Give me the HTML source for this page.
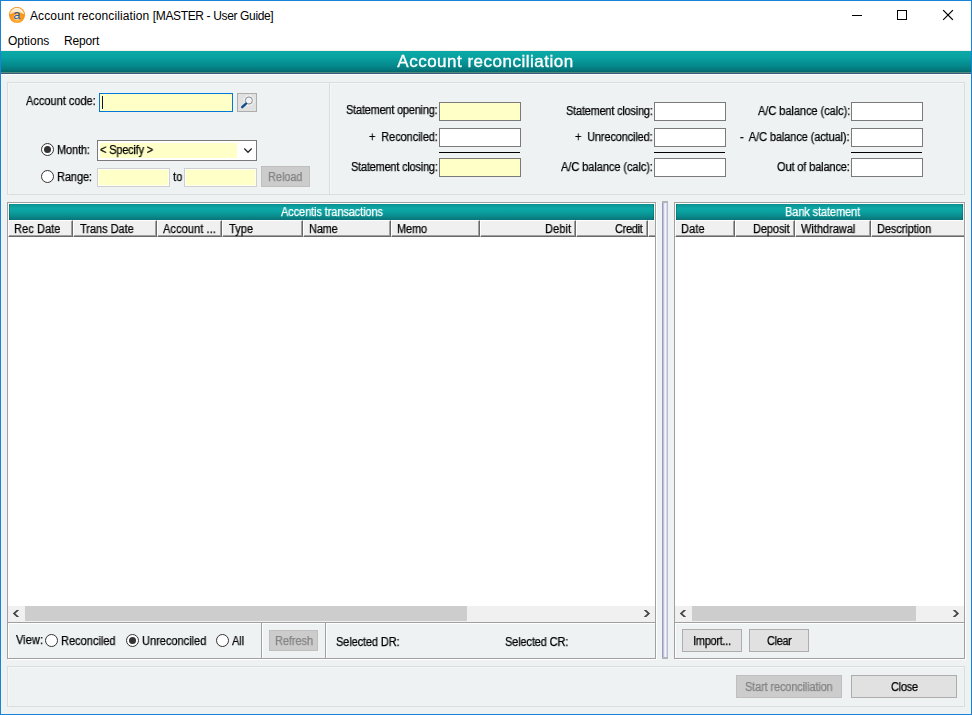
<!DOCTYPE html>
<html lang="en">
<head>
<meta charset="utf-8">
<title>Account reconciliation [MASTER - User Guide]</title>
<style>
*{box-sizing:border-box;margin:0;padding:0}
html,body{width:972px;height:715px;overflow:hidden;background:#eef2f3}
body{position:relative;font-family:"Liberation Sans",Arial,sans-serif;font-size:11px;color:#000}
.abs,.t,.box,.btn,.inp,.hc,.radio{position:absolute}
.t{will-change:transform;-webkit-text-stroke:.25px currentColor;white-space:nowrap;font-size:12px;line-height:14px;height:14px;transform:scaleX(.92);transform-origin:0 50%}
#win{position:absolute;left:0;top:0;width:972px;height:715px;background:#eef2f3;overflow:hidden}
#frame{position:absolute;left:0;top:0;width:972px;height:715px;border:1px solid #1883d7;z-index:50;pointer-events:none}
#titlebar{position:absolute;left:0;top:0;width:972px;height:51px;background:#fff;border-bottom:1px solid #f3f1f0}
#title{-webkit-text-stroke:0;will-change:auto;transform:none;left:30px;top:8px;font-size:12px;line-height:16px;height:16px}
.menu{-webkit-text-stroke:0;will-change:auto;transform:none;font-size:12px;line-height:16px;height:16px;top:33px}
#banner{position:absolute;left:0;top:51px;width:972px;height:24px;background:linear-gradient(#0aa9a6 0%,#09a4a3 25%,#079698 50%,#05878a 72%,#04777b 90%,#03686b 100%) 0 0/100% 21px no-repeat,linear-gradient(#4f8d83,#4f8d83) 0 21px/100% 1px no-repeat,linear-gradient(#3c5878,#3c5878) 0 22px/100% 1px no-repeat,#fbfcfc}
#bannertxt{-webkit-text-stroke:.35px #fff;transform:none;left:0;width:971px;text-align:center;top:1px;font-size:17px;letter-spacing:0.5px;line-height:20px;height:20px;color:#fff}
.panel{position:absolute;border:1px solid #dbdcdc;box-shadow:inset 1px 1px 0 #f5f7f8}
.inp{height:19px;background:#fff;border:1px solid #7a7a7a}
.inp.y{background:#ffffc8}
.inp.dis{border-color:#cfcfcf;box-shadow:inset 0 0 0 1px rgba(255,255,255,.8)}
.btn{background:#e1e1e1;border:1px solid #adadad;text-align:center;font-size:11px;line-height:13px;white-space:nowrap}
.btn.dis{background:#cccccc;border-color:#bfbfbf;color:#838383}
.radio{width:13px;height:13px;border-radius:50%;border:1px solid #333;background:#fff}
.radio.on::after{content:"";position:absolute;left:2px;top:2px;width:7px;height:7px;border-radius:50%;background:#333}
.rule{position:absolute;height:1px;background:#000}
.gridpanel{position:absolute;border:1px solid #a0a0a0;box-shadow:inset 1px 1px 0 #fff,1px 1px 0 #fff;background:#eef2f3}
.teal{position:absolute;height:16px;background:linear-gradient(#0c8f90 0%,#0ca7a6 25%,#0aa3a2 45%,#0a8c8d 75%,#0b7378 100%);box-shadow:inset 1px 0 0 rgba(0,70,75,.3),inset -1px 0 0 rgba(0,70,75,.3)}
.hc{top:0;height:17px;background:#f0f0f0;border-top:1px solid #fff;border-left:1px solid #fff;border-right:1px solid #696969;border-bottom:1px solid #696969;box-shadow:inset -1px -1px 0 #a0a0a0}
.gbody{position:absolute;background:#fff}
.sb{position:absolute;height:16px;background:#f0f0f0}
.thumb{position:absolute;top:0;height:15px;background:#cdcdcd}
.vdiv{position:absolute;width:2px;border-left:1px solid #a0a0a0;border-right:1px solid #fff}
</style>
</head>
<body>
<div id="frame"></div>
<div id="win">
  <div id="titlebar"></div>
  <div class="t" id="title"><span style="letter-spacing:.12px">Account reconciliation </span><span style="letter-spacing:-.36px">[MASTER - User Guide]</span></div>
  <div class="t menu" style="left:8px">Options</div>
  <div class="t menu" style="left:64px;letter-spacing:-.15px">Report</div>
  <div id="banner"><div class="t" id="bannertxt">Account reconciliation</div></div>

  <!-- window controls -->
  <svg class="abs" style="left:846px;top:1px" width="124" height="30" viewBox="0 0 124 30" shape-rendering="crispEdges">
    <rect x="6" y="14" width="10" height="1" fill="#000"/>
    <rect x="51.5" y="9.5" width="9" height="9" fill="none" stroke="#000" stroke-width="1"/>
    <g shape-rendering="auto" stroke="#000" stroke-width="1.1" stroke-linecap="square"><path d="M97.5 9.5 L106.5 18.5 M106.5 9.5 L97.5 18.5"/></g>
  </svg>
  <!-- app icon -->
  <svg class="abs" style="left:9px;top:7px" width="16" height="16" viewBox="0 0 16 16">
    <defs>
      <radialGradient id="og" cx="50%" cy="72%" r="62%"><stop offset="0" stop-color="#ffcf80"/><stop offset="0.45" stop-color="#ff9d1e"/><stop offset="1" stop-color="#f78600"/></radialGradient>
      <linearGradient id="hl" x1="0" y1="0" x2="0" y2="1"><stop offset="0" stop-color="#fff4e0"/><stop offset="1" stop-color="#fde0b0"/></linearGradient>
    </defs>
    <circle cx="8" cy="8" r="8" fill="url(#og)"/>
    <path d="M0.9 7.5 A7.1 6.7 0 0 1 15.1 7.5 Q8 2.4 0.9 7.5Z" fill="url(#hl)"/>
    <ellipse cx="7.8" cy="9.8" rx="3" ry="2.6" fill="#ffe9c4" opacity=".8"/>
    <text x="7.8" y="12" style="font-family:'Liberation Sans',sans-serif;font-size:13px" text-anchor="middle" fill="#2b5aa2">a</text>
  </svg>

  <!-- top panel -->
  <div class="panel" style="left:7px;top:82px;width:958px;height:113px"></div>
  <div class="vdiv" style="left:329px;top:83px;height:111px;border-left-color:#dbdcdc;border-right-color:#f5f7f8"></div>

  <div class="inp y" style="left:99px;top:93px;width:134px;border-color:#0078d7"><div class="abs" style="left:2px;top:2px;width:1px;height:13px;background:#10103c"></div></div>
  <div class="btn" style="left:237px;top:93px;width:20px;height:19px">
    <svg width="18" height="17" viewBox="0 0 18 17" style="position:absolute;left:0;top:0">
      <circle cx="10.9" cy="6.5" r="5" fill="none" stroke="#fff" stroke-width="1" stroke-dasharray="2.2 1.7" opacity=".9"/>
      <circle cx="10.9" cy="6.5" r="3.5" fill="#f3f4f5" stroke="#8c9198" stroke-width="1"/>
      <path d="M8.0 9.6 L4.2 13.2" stroke="#0f4d86" stroke-width="2.3" stroke-linecap="round"/>
    </svg>
  </div>

  <div class="radio on" style="left:41px;top:143px"></div>
  <div class="inp" style="left:97px;top:140px;width:160px;height:21px"><div class="abs" style="left:2px;top:2px;width:137px;height:15px;background:#ffffc8"></div>
    <svg class="abs" style="left:145px;top:7px" width="10" height="6" viewBox="0 0 10 6"><path d="M1.3 0.5 L5 4.3 L8.7 0.5" fill="none" stroke="#262626" stroke-width="1.25"/></svg>
  </div>
  <div class="radio" style="left:41px;top:170px"></div>
  <div class="inp y dis" style="left:97px;top:168px;width:73px"></div>
  <div class="inp y dis" style="left:184px;top:168px;width:73px"></div>
  <div class="btn dis" style="left:261px;top:166px;width:49px;height:21px;padding-top:3px;letter-spacing:-0.2px"><div class="t" style="left:6.4px;top:3px;letter-spacing:-0.10px;color:#838383">Reload</div></div>

  <div class="inp y" style="left:439px;top:102px;width:82px"></div>
  <div class="inp" style="left:439px;top:128px;width:82px"></div>
  <div class="rule" style="left:439px;top:152px;width:81px"></div>
  <div class="inp y" style="left:439px;top:158px;width:82px"></div>

  <div class="inp" style="left:654px;top:102px;width:72px"></div>
  <div class="inp" style="left:654px;top:128px;width:72px"></div>
  <div class="rule" style="left:654px;top:152px;width:71px"></div>
  <div class="inp" style="left:654px;top:158px;width:72px"></div>

  <div class="inp" style="left:851px;top:102px;width:72px"></div>
  <div class="inp" style="left:851px;top:128px;width:72px"></div>
  <div class="rule" style="left:851px;top:152px;width:71px"></div>
  <div class="inp" style="left:851px;top:158px;width:72px"></div>

  <!-- left grid panel : padding box origin = (8,203) -->
  <div class="gridpanel" style="left:7px;top:202px;width:649px;height:457px">
    <div class="teal" style="left:1px;top:1px;width:645px"><div class="t" style="left:272.0px;top:1px;letter-spacing:-0.13px;color:#fff">Accentis transactions</div></div>
    <div class="abs" style="left:0;top:17px;width:647px;height:17px;background:#f0f0f0">
      <div class="hc" style="left:0;width:65px"><div class="t" style="left:5.3px;top:1px;letter-spacing:0.06px">Rec Date</div></div>
      <div class="hc" style="left:65px;width:84px"><div class="t" style="left:5.6px;top:1px;letter-spacing:-0.06px">Trans Date</div></div>
      <div class="hc" style="left:149px;width:65px"><div class="t" style="left:4.6px;top:1px;letter-spacing:0.07px">Account ...</div></div>
      <div class="hc" style="left:214px;width:81px"><div class="t" style="left:5.8px;top:1px;letter-spacing:0.02px">Type</div></div>
      <div class="hc" style="left:295px;width:88px"><div class="t" style="left:5.3px;top:1px;letter-spacing:-0.26px">Name</div></div>
      <div class="hc" style="left:383px;width:89px"><div class="t" style="left:5.1px;top:1px;letter-spacing:-0.21px">Memo</div></div>
      <div class="hc r" style="left:472px;width:96px"><div class="t" style="left:64.1px;top:1px;letter-spacing:0.05px">Debit</div></div>
      <div class="hc r" style="left:568px;width:72px"><div class="t" style="left:38.4px;top:1px;letter-spacing:-0.37px">Credit</div></div>
      <div class="hc" style="left:640px;width:7px;border-right:none;box-shadow:inset 0 -1px 0 #a0a0a0"></div>
    </div>
    <div class="gbody" style="left:0;top:34px;width:647px;height:369px"></div>
    <div class="sb" style="left:0;top:403px;width:647px">
      <div class="thumb" style="left:17px;width:442px"></div>
      <svg class="abs" style="left:4px;top:3px" width="9" height="9" viewBox="0 0 9 9"><polygon points="7.2,0.9 4.6,0.9 0.8,4.5 4.6,8.1 7.2,8.1 3.4,4.5" fill="#454545"/></svg>
      <svg class="abs" style="left:634px;top:3px" width="9" height="9" viewBox="0 0 9 9"><polygon points="1.7,0.9 4.3,0.9 8.1,4.5 4.3,8.1 1.7,8.1 5.5,4.5" fill="#454545"/></svg>
    </div>
    <div class="abs" style="left:0;top:419px;width:647px;height:2px;border-top:1px solid #a0a0a0;border-bottom:1px solid #fff"></div>
    <div class="radio" style="left:37px;top:431px"></div>
    <div class="radio on" style="left:118px;top:431px"></div>
    <div class="radio" style="left:208px;top:431px"></div>
    <div class="vdiv" style="left:253px;top:420px;height:35px"></div>
    <div class="btn dis" style="left:261px;top:427px;width:49px;height:21px;padding-top:3px;letter-spacing:-0.2px"><div class="t" style="left:5.1px;top:3px;letter-spacing:-0.11px;color:#838383">Refresh</div></div>
    <div class="vdiv" style="left:317px;top:420px;height:35px"></div>
  </div>

  <!-- splitter -->
  <div class="abs" style="left:662px;top:201px;width:6px;height:458px;background:linear-gradient(90deg,#8a8aac 0%,#aeaecb 18%,#e6e6f8 40%,#f5f5ff 58%,#d0d0e4 80%,#aaaac2 100%);border-top:2px solid #b4b4b4;border-bottom:2px solid #b4b4b4"></div>

  <!-- right grid panel : padding box origin = (675,203) -->
  <div class="gridpanel" style="left:674px;top:202px;width:291px;height:457px">
    <div class="teal" style="left:1px;top:1px;width:287px"><div class="t" style="left:109.0px;top:1px;letter-spacing:-0.13px;color:#fff">Bank statement</div></div>
    <div class="abs" style="left:0;top:17px;width:289px;height:17px;overflow:hidden;background:#f0f0f0">
      <div class="hc" style="left:0;width:60px"><div class="t" style="left:5.3px;top:1px;letter-spacing:0.10px">Date</div></div>
      <div class="hc r" style="left:60px;width:60px"><div class="t" style="left:17.4px;top:1px;letter-spacing:-0.13px">Deposit</div></div>
      <div class="hc" style="left:120px;width:76px"><div class="t" style="left:4.8px;top:1px;letter-spacing:-0.04px">Withdrawal</div></div>
      <div class="hc" style="left:196px;width:100px;border-right:none;box-shadow:inset 0 -1px 0 #a0a0a0"><div class="t" style="left:5.3px;top:1px;letter-spacing:-0.12px">Description</div></div>
    </div>
    <div class="gbody" style="left:0;top:34px;width:289px;height:369px"></div>
    <div class="sb" style="left:0;top:403px;width:289px">
      <div class="thumb" style="left:17px;width:224px"></div>
      <svg class="abs" style="left:4px;top:3px" width="9" height="9" viewBox="0 0 9 9"><polygon points="7.2,0.9 4.6,0.9 0.8,4.5 4.6,8.1 7.2,8.1 3.4,4.5" fill="#454545"/></svg>
      <svg class="abs" style="left:276px;top:3px" width="9" height="9" viewBox="0 0 9 9"><polygon points="1.7,0.9 4.3,0.9 8.1,4.5 4.3,8.1 1.7,8.1 5.5,4.5" fill="#454545"/></svg>
    </div>
    <div class="abs" style="left:0;top:419px;width:289px;height:2px;border-top:1px solid #a0a0a0;border-bottom:1px solid #fff"></div>
    <div class="btn" style="left:7px;top:426px;width:60px;height:23px;padding-top:4px"><div class="t" style="left:10.1px;top:4px;letter-spacing:-0.34px">Import...</div></div>
    <div class="btn" style="left:74px;top:426px;width:60px;height:23px;padding-top:4px"><div class="t" style="left:17.4px;top:4px;letter-spacing:-0.42px">Clear</div></div>
  </div>

  <!-- bottom panel -->
  <div class="panel" style="left:7px;top:666px;width:958px;height:41px"></div>
  <div class="btn dis" style="left:736px;top:675px;width:106px;height:23px;padding-top:4px;letter-spacing:-0.2px"><div class="t" style="left:7.9px;top:4px;letter-spacing:-0.18px;color:#838383">Start reconciliation</div></div>
  <div class="btn" style="left:851px;top:675px;width:106px;height:23px;padding-top:4px"><div class="t" style="left:39.1px;top:4px;letter-spacing:-0.33px">Close</div></div>

  <div class="t" style="left:26.1px;top:94px;letter-spacing:-0.02px">Account code:</div>
  <div class="t" style="left:57.1px;top:143px;letter-spacing:-0.15px">Month:</div>
  <div class="t" style="left:100.1px;top:143px;letter-spacing:-0.22px">&lt; Specify &gt;</div>
  <div class="t" style="left:57.1px;top:170px;letter-spacing:-0.12px">Range:</div>
  <div class="t" style="left:173.1px;top:170px;letter-spacing:0.13px">to</div>
  <div class="t" style="left:346.4px;top:103px;letter-spacing:-0.26px">Statement opening:</div>
  <div class="t" style="left:369.1px;top:130px;letter-spacing:-0.12px">+&nbsp; Reconciled:</div>
  <div class="t" style="left:351.4px;top:160px;letter-spacing:-0.26px">Statement closing:</div>
  <div class="t" style="left:566.4px;top:104px;letter-spacing:-0.26px">Statement closing:</div>
  <div class="t" style="left:575.4px;top:130px;letter-spacing:-0.18px">+&nbsp; Unreconciled:</div>
  <div class="t" style="left:560.9px;top:160px;letter-spacing:-0.08px">A/C balance (calc):</div>
  <div class="t" style="left:757.6px;top:104px;letter-spacing:-0.06px">A/C balance (calc):</div>
  <div class="t" style="left:740.4px;top:130px;letter-spacing:-0.13px">-&nbsp; A/C balance (actual):</div>
  <div class="t" style="left:777.1px;top:160px;letter-spacing:-0.16px">Out of balance:</div>
  <div class="t" style="left:15.6px;top:633px;letter-spacing:0.08px">View:</div>
  <div class="t" style="left:61.3px;top:634px;letter-spacing:-0.01px">Reconciled</div>
  <div class="t" style="left:142.1px;top:634px;letter-spacing:-0.02px">Unreconciled</div>
  <div class="t" style="left:232.1px;top:634px;letter-spacing:-0.03px">All</div>
  <div class="t" style="left:336.4px;top:635px;letter-spacing:-0.14px">Selected DR:</div>
  <div class="t" style="left:505.1px;top:635px;letter-spacing:-0.17px">Selected CR:</div>
</div>
</body>
</html>
